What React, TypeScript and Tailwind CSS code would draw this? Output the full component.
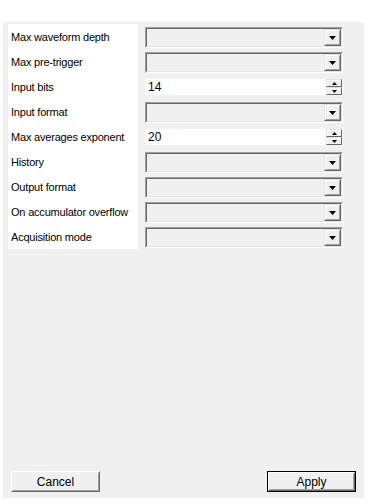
import React from "react";

const rows: { label: string; kind: "combo" | "spin"; value?: string }[] = [
  { label: "Max waveform depth", kind: "combo" },
  { label: "Max pre-trigger", kind: "combo" },
  { label: "Input bits", kind: "spin", value: "14" },
  { label: "Input format", kind: "combo" },
  { label: "Max averages exponent", kind: "spin", value: "20" },
  { label: "History", kind: "combo" },
  { label: "Output format", kind: "combo" },
  { label: "On accumulator overflow", kind: "combo" },
  { label: "Acquisition mode", kind: "combo" },
];

function Combo() {
  return (
    <div className="h-[21px] w-[198px] border border-t-[#a0a0a0] border-l-[#a0a0a0] border-b-white border-r-white">
      <div className="h-full border border-t-[#696969] border-l-[#696969] border-b-[#e3e3e3] border-r-[#e3e3e3] bg-[#f0f0f0] flex justify-end">
        <div className="h-full w-[17px] border border-t-[#e3e3e3] border-l-[#e3e3e3] border-b-[#696969] border-r-[#696969]">
          <div className="h-full w-full border border-t-white border-l-white border-b-[#a0a0a0] border-r-[#a0a0a0] bg-[#f0f0f0] flex items-center justify-center">
            <svg width="7" height="4" viewBox="0 0 7 4">
              <path d="M0 0H7L3.5 4Z" fill="#000" />
            </svg>
          </div>
        </div>
      </div>
    </div>
  );
}

function SpinBtn({ up }: { up: boolean }) {
  return (
    <div className="h-[8px] w-[16px] border border-t-[#e3e3e3] border-l-[#e3e3e3] border-b-[#696969] border-r-[#696969]">
      <div className="h-full w-full border-t border-l border-t-white border-l-white bg-[#f0f0f0] flex items-center justify-center">
        <svg width="5" height="3" viewBox="0 0 5 3">
          {up ? <path d="M2.5 0L5 3H0Z" fill="#000" /> : <path d="M0 0H5L2.5 3Z" fill="#000" />}
        </svg>
      </div>
    </div>
  );
}

function Spin({ value }: { value: string }) {
  return (
    <div className="h-[21px] w-[198px] pt-[2px]">
      <div className="h-[16px] w-[198px] bg-white flex items-center justify-between pl-[3px] pr-[1px]">
        <span className="text-[12px] leading-none text-black">{value}</span>
        <div className="flex flex-col">
          <SpinBtn up />
          <SpinBtn up={false} />
        </div>
      </div>
    </div>
  );
}

function Button({ label, def }: { label: string; def?: boolean }) {
  return (
    <div className={"h-[21px] w-[89px] " + (def ? "border border-black" : "")}>
      <div className="h-full w-full border border-t-white border-l-white border-b-[#696969] border-r-[#696969]">
        <div className="h-full w-full border border-t-[#f0f0f0] border-l-[#f0f0f0] border-b-[#a0a0a0] border-r-[#a0a0a0] bg-[#f0f0f0] flex items-center justify-center text-[12px] text-black leading-none">
          {label}
        </div>
      </div>
    </div>
  );
}

export default function App() {
  return (
    <div
      className="w-[368px] h-[501px] bg-white flex flex-col"
      style={{ fontFamily: '"Liberation Sans", Arial, sans-serif' }}
    >
      <div className="h-[22px] shrink-0" />
      <div className="ml-[3px] w-[361px] h-[476px] bg-[#f0f0f0] flex flex-col">
        <div className="flex flex-row pt-[2px] pl-[5px] gap-[7px]">
          <div className="w-[130px] bg-white pt-[3px] pb-[1px] flex flex-col gap-[4px]">
            {rows.map((r) => (
              <div key={r.label} className="h-[21px] flex items-center pl-[3px] pb-[1px] text-[11px] tracking-[-0.2px] text-black whitespace-nowrap">
                {r.label}
              </div>
            ))}
          </div>
          <div className="pt-[3px] flex flex-col gap-[4px]">
            {rows.map((r) =>
              r.kind === "combo" ? <Combo key={r.label} /> : <Spin key={r.label} value={r.value!} />
            )}
          </div>
        </div>
        <div className="mt-auto flex justify-between pl-[8px] pr-[8px] pb-[6px]">
          <Button label="Cancel" />
          <Button label="Apply" def />
        </div>
      </div>
    </div>
  );
}
